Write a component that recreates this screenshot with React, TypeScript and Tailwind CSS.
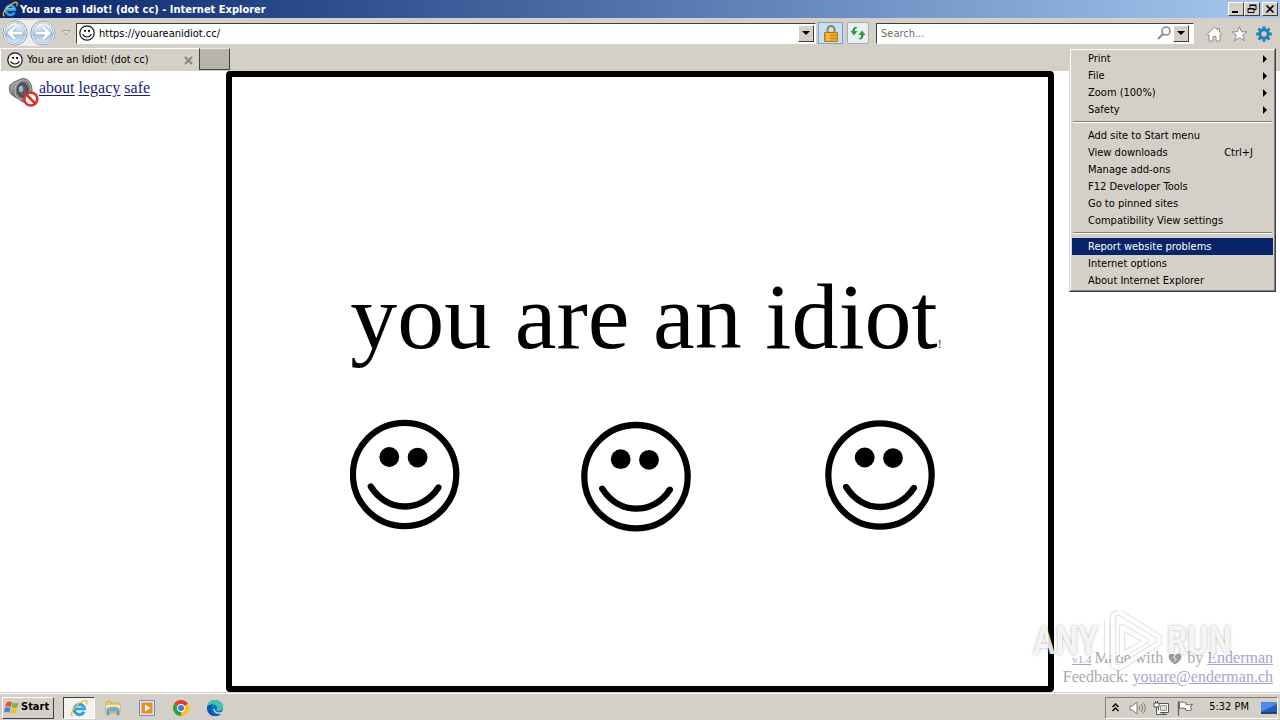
import type { ReactNode } from "react";

const raised =
  "border border-t-white border-l-white border-r-[#404040] border-b-[#404040] bg-[#d4d0c8]";

function IeLogo({ className }: { className: string }) {
  return (
    <svg viewBox="0 0 20 20" className={className} aria-hidden="true">
      <path
        d="M15.6 13.2a5.7 5.7 0 1 1 .5-3.4H6"
        fill="none"
        stroke="#2f9fe6"
        strokeWidth="3.4"
        transform="translate(0 1)"
      />
      <path
        d="M3.2 18.6C-.4 18.4 2 12.6 6.6 8 11.8 2.8 18.6-.2 19 2.6c.2 1-.3 2.2-1 3.5"
        fill="none"
        stroke="#f2c230"
        strokeWidth="1.5"
      />
      <path d="M6 9.6h9.5" stroke="#8fd3fb" strokeWidth="1" />
    </svg>
  );
}

function TinySmiley() {
  return (
    <svg viewBox="0 0 16 16" className="size-4 shrink-0" aria-hidden="true">
      <circle cx="8" cy="8" r="7.2" fill="#fff" stroke="#111" strokeWidth="1.2" />
      <circle cx="6" cy="5.8" r="1.1" />
      <circle cx="10" cy="5.9" r="1.1" />
      <path d="M3.6 9.3c2 3.6 6.8 3.6 8.8 0" fill="none" stroke="#111" strokeWidth="1.2" />
    </svg>
  );
}

function NavArrow({ back, label }: { back?: boolean; label: string }) {
  return (
    <button aria-label={label} className="shrink-0">
      <svg viewBox="0 0 26 26" className="size-[26px]">
        <defs>
          <linearGradient id={back ? "orbB" : "orbF"} x1="0" y1="0" x2="0" y2="1">
            <stop offset="0" stopColor="#f4f8fc" />
            <stop offset=".45" stopColor="#c4d6e8" />
            <stop offset=".55" stopColor="#a3c0dc" />
            <stop offset="1" stopColor="#d8ecfa" />
          </linearGradient>
        </defs>
        <circle cx="13" cy="13" r="12.2" fill="#f3f5f8" stroke="#8d99a8" strokeWidth="1" />
        <circle cx="13" cy="13" r="10.3" fill={back ? "url(#orbB)" : "url(#orbF)"} stroke="#9fb3c9" strokeWidth=".8" />
        <path
          d={back ? "M20 13H7.5M13 7l-6 6 6 6" : "M6 13h12.5M13 7l6 6-6 6"}
          fill="none"
          stroke="#7f9fc0"
          strokeWidth="4.2"
        />
        <path
          d={back ? "M20 13H7.5M13 7l-6 6 6 6" : "M6 13h12.5M13 7l6 6-6 6"}
          fill="none"
          stroke="#fff"
          strokeWidth="3"
        />
      </svg>
    </button>
  );
}

function DropButton({ label }: { label: string }) {
  return (
    <button
      aria-label={label}
      className={`${raised} flex h-[17px] w-4 shrink-0 items-center justify-center`}
    >
      <svg viewBox="0 0 8 4" className="h-1 w-2">
        <path d="M0 0h8L4 4z" />
      </svg>
    </button>
  );
}

function WindowButton({ label, children }: { label: string; children: ReactNode }) {
  return (
    <button aria-label={label} className={`${raised} flex h-[14px] w-4 items-center justify-center`}>
      <svg viewBox="0 0 12 10" className="h-[10px] w-3" fill="none" stroke="#000">
        {children}
      </svg>
    </button>
  );
}

function TitleBar() {
  return (
    <header className="flex h-[18px] shrink-0 items-center bg-linear-to-r from-[#0a246a] to-[#a6caf0] pr-[2px] pl-[2px]">
      <IeLogo className="size-4" />
      <h2 className="flex-1 pt-[2px] pl-[2px] text-[11px] leading-4 font-bold text-white">
        You are an Idiot! (dot cc) - Internet Explorer
      </h2>
      <div className="flex">
        <WindowButton label="Minimize">
          <path d="M2 8h6" strokeWidth="2" />
        </WindowButton>
        <WindowButton label="Restore">
          <path d="M4 3.5V1.5h6v4H8M3.5 1h7M2 4.5h6v4H2zM2 5h6" />
        </WindowButton>
        <span className="w-[2px]" />
        <WindowButton label="Close">
          <path d="M2.5 1.5l7 7M9.5 1.5l-7 7" strokeWidth="1.6" />
        </WindowButton>
      </div>
    </header>
  );
}

function Toolbar() {
  return (
    <div className="flex h-[30px] shrink-0 items-center bg-[#d4d0c8] pr-2 pl-[2px]">
      <div className="flex gap-[2px] rounded-full bg-[#eceef0]">
        <NavArrow back label="Back" />
        <NavArrow label="Forward" />
      </div>
      <button aria-label="Recent pages" className="mx-[5px]">
        <svg viewBox="0 0 10 6" className="h-[6px] w-[10px]">
          <path d="M1 .5h8l-4 4.5z" fill="#dedad2" stroke="#aaa69c" />
        </svg>
      </button>
      <div className="flex h-[21px] flex-1 items-center border border-t-[#404040] border-r-white border-b-white border-l-[#404040] bg-white pr-px pl-[2px]">
        <TinySmiley />
        <input
          aria-label="Address"
          defaultValue="https://youareanidiot.cc/"
          className="min-w-0 flex-1 bg-transparent pt-[2px] pl-1 text-[11px] outline-none"
        />
        <DropButton label="Show address history" />
      </div>
      <button
        aria-label="Security report"
        className="ml-[2px] flex h-[22px] w-[25px] items-center justify-center border border-[#7da2ce] bg-[#c9dff8]"
      >
        <svg viewBox="0 0 14 17" className="h-[17px] w-[14px]">
          <path d="M3.5 8V4.5a3.5 3.5 0 0 1 7 0V8" fill="none" stroke="#9a8448" strokeWidth="2" />
          <path d="M.5 7.5h13v9H.5z" fill="#e9ab24" stroke="#b57b0c" />
          <path d="M1 10.5h12M1 13.5h12" stroke="#c88c14" />
          <path d="M2 8.5h4v7H2z" fill="#f8d468" opacity=".5" />
        </svg>
      </button>
      <button
        aria-label="Refresh"
        className="ml-1 flex size-[22px] items-center justify-center rounded-[2px] border border-[#a9adb0] bg-[#e8eef2]"
      >
        <svg viewBox="0 0 16 14" className="h-[14px] w-4">
          <path d="M8 2C5.500 1.500 5 3 5 5H7.500L4 9.500.5 5h2C2.500 1.500 5 0 8 2z" fill="#2f9a33" />
          <path d="M8 12.500c2.500.5 3-1 3-3.500H8.500L12 4.500 15.500 9h-2c0 4-2.500 5.500-5.500 3.500z" fill="#2f9a33" />
        </svg>
      </button>
      <div className="ml-[7px] flex h-[21px] w-[318px] items-center border border-t-[#404040] border-r-white border-b-white border-l-[#404040] bg-white pr-1">
        <input
          aria-label="Search"
          placeholder="Search..."
          className="min-w-0 flex-1 bg-transparent pt-[2px] pl-1 text-[11px] outline-none placeholder:text-[#6d6d6d]"
        />
        <svg viewBox="0 0 14 14" className="mr-[2px] size-[14px]" fill="none" stroke="#8a8a8a">
          <circle cx="9" cy="5" r="4" strokeWidth="1.6" />
          <path d="M6 8l-5 5" strokeWidth="2.2" />
        </svg>
        <DropButton label="Search options" />
      </div>
      <div className="ml-3 flex items-center gap-2 pt-[2px]">
        <button aria-label="Home">
          <svg viewBox="0 0 17 16" className="h-4 w-[17px]" fill="#fff" stroke="#8c8c8c">
            <path d="M8.5 1L1 8.5l1 1 1-.8V15h4v-4.5h3V15h4V8.7l1 .8 1-1-2.5-2.5V2.5h-2V4z" />
          </svg>
        </button>
        <button aria-label="Favorites">
          <svg viewBox="0 0 17 16" className="h-4 w-[17px]" fill="#fff" stroke="#8c8c8c">
            <path d="M8.5.8l2 5h5.5l-4.3 3.4 1.6 5.6-4.8-3.2-4.8 3.2 1.6-5.6L1 5.8h5.5z" />
          </svg>
        </button>
        <button aria-label="Tools">
          <svg viewBox="-8 -8 16 16" className="size-4" stroke="#1d83b8" fill="none">
            <circle r="4.2" strokeWidth="3" />
            <path
              d="M0-7.8V-5M0 5v2.8M-7.8 0H-5M5 0h2.8M-5.5-5.5l2 2M3.5 3.5l2 2M-5.5 5.5l2-2M3.5-3.5l2-2"
              strokeWidth="3"
            />
          </svg>
        </button>
      </div>
    </div>
  );
}

function TabRow() {
  return (
    <div className="flex h-[23px] shrink-0 bg-[#d4d0c8]">
      <div className="flex w-[199px] items-center border-t border-l border-white pr-[6px] pl-[6px]">
        <TinySmiley />
        <span className="flex-1 pl-1 text-[11px]">You are an Idiot! (dot cc)</span>
        <button aria-label="Close tab">
          <svg viewBox="0 0 9 9" className="size-[9px]" stroke="#8b8882" strokeWidth="2">
            <path d="M1 1l7 7M8 1L1 8" />
          </svg>
        </button>
      </div>
      <button
        aria-label="New tab"
        className="h-[22px] w-[31px] border border-t-[#e8e5e0] border-r-[#404040] border-b-[#404040] border-l-[#404040] bg-[#b9b3ae]"
      />
    </div>
  );
}

type Item = { label: string; sub?: boolean; keys?: string; active?: boolean };

const menu: Item[][] = [
  [
    { label: "Print", sub: true },
    { label: "File", sub: true },
    { label: "Zoom (100%)", sub: true },
    { label: "Safety", sub: true },
  ],
  [
    { label: "Add site to Start menu" },
    { label: "View downloads", keys: "Ctrl+J" },
    { label: "Manage add-ons" },
    { label: "F12 Developer Tools" },
    { label: "Go to pinned sites" },
    { label: "Compatibility View settings" },
  ],
  [
    { label: "Report website problems", active: true },
    { label: "Internet options" },
    { label: "About Internet Explorer" },
  ],
];

function ToolsMenu() {
  return (
    <div
      role="menu"
      aria-label="Tools"
      className="absolute top-12 right-1 z-20 w-[207px] border border-t-[#d4d0c8] border-r-[#404040] border-b-[#404040] border-l-[#d4d0c8] bg-[#d4d0c8] text-[11px]"
    >
      <div className="border border-t-white border-r-[#808080] border-b-[#808080] border-l-white px-px pb-px">
        {menu.map((group, i) => (
          <div key={i}>
            {i > 0 && (
              <div role="separator" className="mx-px mt-[3px] mb-1 box-content h-px border-b border-white bg-[#808080]" />
            )}
            {group.map((item) => (
              <button
                key={item.label}
                role="menuitem"
                className={`flex h-[17px] w-full items-center pr-[6px] pl-4 text-left ${
                  item.active ? "bg-[#0a246a] text-white" : ""
                }`}
              >
                <span className="flex-1 pt-px whitespace-nowrap">{item.label}</span>
                {item.keys && <span className="pt-px pr-[14px]">{item.keys}</span>}
                {item.sub && (
                  <svg viewBox="0 0 4 8" className="h-2 w-1">
                    <path d="M0 0l4 4-4 4z" />
                  </svg>
                )}
              </button>
            ))}
          </div>
        ))}
      </div>
    </div>
  );
}

function Face({ x, y }: { x: number; y: number }) {
  return (
    <g transform={`translate(${x} ${y})`}>
      <circle r="51.7" fill="none" stroke="#000" strokeWidth="6.3" />
      <circle cx="-15.3" cy="-17.5" r="9.9" />
      <circle cx="13" cy="-16.9" r="9.9" />
      <path
        d="M-33.8 12C-17.5 38.5 17.5 38.5 33.8 13"
        fill="none"
        stroke="#000"
        strokeWidth="6.3"
        strokeLinecap="round"
      />
    </g>
  );
}

function MutedSpeaker() {
  return (
    <svg viewBox="0 0 32 32" className="size-8" aria-hidden="true">
      <defs>
        <linearGradient id="cone" x1="0" y1="0" x2="1" y2="1">
          <stop offset="0" stopColor="#c8c8c8" />
          <stop offset=".5" stopColor="#6b6b6b" />
          <stop offset="1" stopColor="#2d2d2d" />
        </linearGradient>
      </defs>
      <path d="M2 8l4-3 7-3c6-2 11 4 11 11s-4 13-9 12L7 20l-4-3c-2-3-2-6-1-9z" fill="url(#cone)" stroke="#666" />
      <ellipse cx="15" cy="13" rx="8" ry="10" fill="#777" stroke="#bdbdbd" transform="rotate(8 15 13)" />
      <ellipse cx="14.5" cy="13" rx="5" ry="6.5" fill="#535b70" stroke="#333" />
      <ellipse cx="13" cy="12" rx="2.2" ry="3.2" fill="#a8b0c4" />
      <circle cx="22.8" cy="22" r="6.5" fill="#fff" stroke="#d8322a" strokeWidth="2.6" />
      <path d="M18.3 17.5l9 9" stroke="#d8322a" strokeWidth="2.6" />
    </svg>
  );
}

function Watermark() {
  return (
    <div
      aria-hidden="true"
      className="absolute right-12 bottom-5 flex items-center gap-1 text-[38px] leading-none font-medium text-white/85 [font-family:'Roboto_Condensed','Liberation_Sans_Narrow','Liberation_Sans',sans-serif] [text-shadow:0_0_3px_rgba(90,90,90,0.5)]"
    >
      <span>ANY</span>
      <svg viewBox="0 0 60 62" className="h-[62px] w-[60px]" fill="none" strokeLinejoin="round">
        <g stroke="#888" strokeOpacity=".22" strokeWidth="6.5">
          <path d="M5 11v38M11 56V5l6-3 40 25v6L17 58z" />
          <path d="M20 17v28l24-14z" />
        </g>
        <g stroke="#fff" strokeOpacity=".95" strokeWidth="4">
          <path d="M5 11v38M11 56V5l6-3 40 25v6L17 58z" />
          <path d="M20 17v28l24-14z" />
        </g>
      </svg>
      <span>RUN</span>
    </div>
  );
}

function WebPage() {
  return (
    <main className="relative min-h-0 flex-1 overflow-hidden bg-white [font-family:'Liberation_Serif',serif]">
      <section className="mx-auto flex aspect-[4/3] h-full flex-col items-center rounded-[4px] border-[6px] border-black pt-[185px] pl-3">
        <h1 className="text-[94px] leading-[108px] whitespace-nowrap">
          you are an idiot<span className="text-[12px] text-[#333]">!</span>
        </h1>
        <svg viewBox="347 416 592 118" className="mt-[19px] h-[118px] w-[592px] shrink-0" role="img" aria-label="Three smiling faces">
          <Face x={401.6} y={473.5} />
          <Face x={633} y={475.7} />
          <Face x={877} y={474} />
        </svg>
      </section>
      <nav className="absolute top-[6px] left-2 flex text-base leading-[22px] text-[#1a1a7a]">
        <MutedSpeaker />
        <span className="-ml-px flex gap-1 underline underline-offset-2">
          <a href="#about">about</a>
          <a href="#legacy">legacy</a>
          <a href="#safe">safe</a>
        </span>
      </nav>
      <footer className="absolute right-[7px] bottom-[7px] text-right text-base leading-[17px] text-[#a8a8a8]">
        <p className="flex items-baseline justify-end gap-1">
          <a href="#version" className="text-[11px] text-[#a9a4cc] underline">
            v1.4
          </a>
          <span className="-ml-px">Made with</span>
          <svg viewBox="0 0 16 14" className="h-3 w-4 self-center" role="img" aria-label="love">
            <path d="M8 13.5C3 10 .5 7.5.5 4.3.5.5 5.5-.8 8 3c2.5-3.8 7.5-2.5 7.5 1.3C15.5 7.5 13 10 8 13.5z" fill="#9c9c9c" />
            <path d="M8 2L6.5 5.5l3 1.5L7.5 10" fill="none" stroke="#fff" />
          </svg>
          <span>by</span>
          <a href="#author" className="text-[#a9a4cc] underline">
            Enderman
          </a>
        </p>
        <p>
          Feedback:{" "}
          <a href="mailto:youare@enderman.ch" className="text-[#a9a4cc] underline">
            youare@enderman.ch
          </a>
        </p>
      </footer>
      <Watermark />
    </main>
  );
}

function Taskbar() {
  return (
    <footer className="flex h-7 shrink-0 items-center border-t border-[#d4d0c8] bg-[#d4d0c8] pt-[2px] pr-[2px] pl-[2px] shadow-[inset_0_1px_0_#ffffff]">
      <button className={`${raised} flex h-[22px] w-[52px] items-center gap-px pl-px text-[11px] font-bold`}>
        <svg viewBox="0 0 16 15" className="h-[15px] w-4 shrink-0" aria-hidden="true">
          <path d="M2.5 2.5C4.5 1 6 1.2 8 2.3L6.8 7C5 6 3.3 6 1.3 7.2z" fill="#e8552a" />
          <path d="M8.8 2.7c2 1 3.8 1 6-.2L13.5 7c-2 1.2-3.900 1.200-5.900.2z" fill="#7bb83a" />
          <path d="M1 8C3 6.9 4.700 7 6.500 8l-1.200 4.600C3.500 11.600 2 11.500-.1 12.600z" fill="#3a86d8" />
          <path d="M7.300 8.300c2 1 3.900 1 5.900-.2l-1.300 4.600c-2 1.200-3.800 1.100-5.800.2z" fill="#f5bd22" />
        </svg>
        Start
      </button>
      <div className="ml-[9px] flex items-center">
        <button
          aria-label="Internet Explorer"
          className="flex h-[22px] w-8 items-center justify-center border border-t-[#404040] border-r-white border-b-white border-l-[#404040] bg-[#f4f2ef]"
        >
          <IeLogo className="size-[18px]" />
        </button>
        <button aria-label="File Explorer" className="flex w-9 justify-center">
          <svg viewBox="0 0 18 16" className="h-4 w-[18px]">
            <path d="M2 2l4-1 1 2h8l1 3v7H2z" fill="#e9cc6a" stroke="#c9a13c" strokeWidth=".8" />
            <path d="M2 5h14v6H2z" fill="#f8e9a8" />
            <path d="M3 15V9c1-2 11-2 12 0v6h-2v-4H5v4z" fill="#6fb5de" stroke="#3c8abc" strokeWidth=".6" />
          </svg>
        </button>
        <button aria-label="Media Player" className="flex w-8 justify-center">
          <svg viewBox="0 0 16 16" className="size-4">
            <path d="M.5.5h15v15H.5z" fill="#dbe9f6" stroke="#5d94c6" />
            <path d="M2.5 2.5h11v11h-11z" fill="#f28b1d" />
            <path d="M6 4.5l5.5 3.5L6 11.5z" fill="#fff" />
          </svg>
        </button>
        <button aria-label="Chrome" className="flex w-9 justify-center">
          <svg viewBox="0 0 16 16" className="size-4">
            <path d="M8 8L1.07 4A8 8 0 0 1 14.93 4z" fill="#e33b2e" />
            <path d="M8 8l6.93-4A8 8 0 0 1 8 16z" fill="#fbc116" />
            <path d="M8 8v8A8 8 0 0 1 1.07 4z" fill="#2da04a" />
            <circle cx="8" cy="8" r="3.9" fill="#fff" />
            <circle cx="8" cy="8" r="3" fill="#3b78e7" />
          </svg>
        </button>
        <button aria-label="Edge" className="flex w-8 justify-center">
          <svg viewBox="0 0 16 16" className="size-4">
            <circle cx="8" cy="8" r="8" fill="#1273c4" />
            <path d="M.1 7C1 2.5 4.5 0 8.2 0 13 0 16 3.5 16 7c0 3-2.5 4.2-5 4-1.5-.2-2-.8-1.2-1.8C11 7.3 9.5 4.6 6 4.6 3.5 4.6 1.2 5.5.1 7z" fill="#3fc4b0" />
            <path d="M.1 7C1.5 4.8 4 4.2 6 4.6 3.5 6.5 3.8 11 6.5 13.5c2 1.6 5 1.6 8 0C11 17.5 4 17 1.2 12.2.2 10.5-.1 8.5.1 7z" fill="#0e56a5" />
            <path d="M7 9c0 2.5 2.5 4.8 6.5 3.8.9-.2 1.2.1.8.7" fill="none" stroke="#d4e8f4" strokeWidth="1.2" />
          </svg>
        </button>
      </div>
      <div className="ml-auto flex h-[22px] w-[173px] items-center border border-t-[#808080] border-r-white border-b-white border-l-[#808080] pl-[6px] text-[11px]">
        <button aria-label="Show hidden icons">
          <svg viewBox="0 0 7 9" className="h-[9px] w-[7px]" fill="none" stroke="#000" strokeWidth="1.5">
            <path d="M.5 4l3-3 3 3M.5 8l3-3 3 3" />
          </svg>
        </button>
        <button aria-label="Volume" className="ml-[10px]">
          <svg viewBox="0 0 17 14" className="h-[14px] w-[17px]" fill="none" stroke="#777">
            <path d="M1 5h2.5L8 1v12L3.5 9H1z" fill="#fff" />
            <path d="M10 5c1 1.2 1 2.8 0 4M12 3c2 2.5 2 5.5 0 8M14 1.5c3 3.5 3 7.5 0 11" />
          </svg>
        </button>
        <button aria-label="Network" className="ml-[7px]">
          <svg viewBox="0 0 17 16" className="h-4 w-[17px]" fill="#fff" stroke="#555">
            <path d="M5.5 3.5h10v9h-10zM7 14.5h7M10.5 12.5v2" />
            <path d="M7.5 5.5h6v5h-6z" fill="#ddd" stroke="#999" />
            <path d="M1 3h5v4H1zM2.5 1v2M4.5 1v2M3.5 7v7.5H8" />
          </svg>
        </button>
        <button aria-label="Action Center" className="ml-[7px]">
          <svg viewBox="0 0 17 16" className="h-4 w-[17px]" fill="#fff" stroke="#666">
            <path d="M1.5 1v14.5" fill="none" strokeWidth="1.4" />
            <path d="M2.5 2.5c3-1 4.500 0 6.500.5v1.500c2.500.5 4 .3 6.500-.5l-2 3 1 3c-3 .8-4.500.5-6 0V8.500c-2-.5-3.500-.5-6 0z" />
          </svg>
        </button>
        <time className="ml-auto whitespace-nowrap">5:32 PM</time>
        <button aria-label="Show desktop" className="ml-3">
          <svg viewBox="0 0 16 14" className="h-[14px] w-4">
            <path d="M0 1h16v10H0z" fill="#1f5cbc" />
            <path d="M0 11L16 3v-2H0z" fill="#4c8de0" />
            <path d="M0 11h16v2H0z" fill="#24406c" />
          </svg>
        </button>
      </div>
    </footer>
  );
}

export default function App() {
  return (
    <div className="relative flex h-screen flex-col overflow-hidden text-black [font-family:'DejaVu_Sans_Condensed','Noto_Sans',sans-serif]">
      <TitleBar />
      <Toolbar />
      <TabRow />
      <WebPage />
      <Taskbar />
      <ToolsMenu />
    </div>
  );
}
